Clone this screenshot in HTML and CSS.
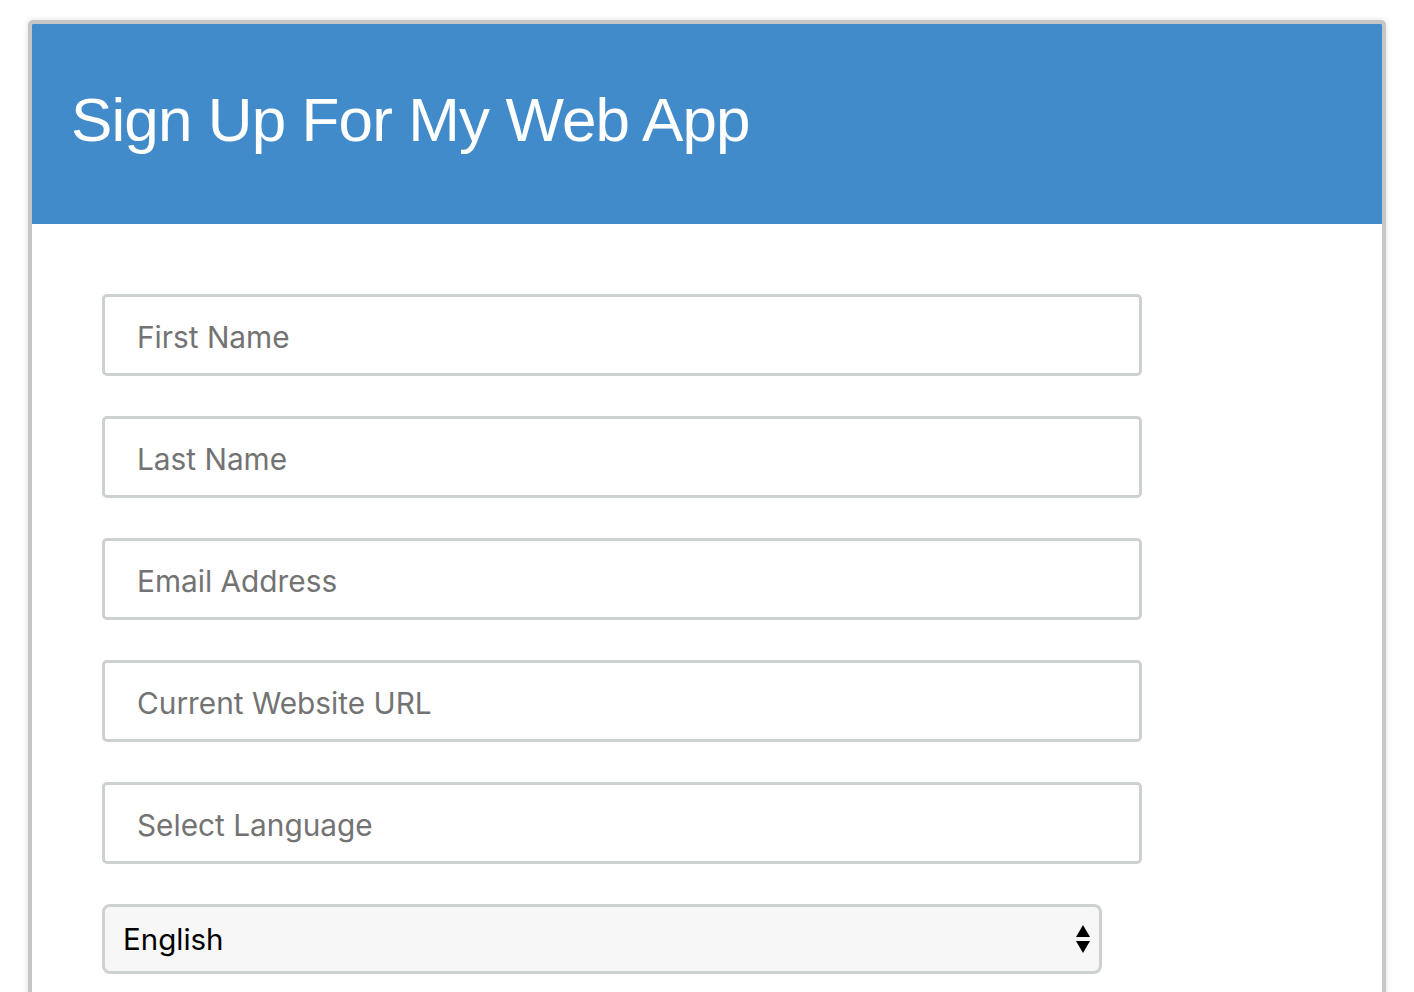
FILE: index.html
```html
<!DOCTYPE html>
<html lang="en">
<head>
<meta charset="utf-8">
<title>Sign Up For My Web App</title>
<link rel="stylesheet" href="styles.css">
</head>
<body>
<div class="page">
  <div class="card">
    <header class="card-header">
      <h1 class="title">Sign Up For My Web App</h1>
    </header>
    <form class="form">
      <input class="field" type="text" placeholder="First Name">
      <input class="field" type="text" placeholder="Last Name">
      <input class="field" type="email" placeholder="Email Address">
      <input class="field" type="url" placeholder="Current Website URL">
      <input class="field" type="text" placeholder="Select Language">
      <div class="select">
        <span class="select-value">English</span>
        <svg class="select-arrows" width="14" height="28" viewBox="0 0 14 28" aria-hidden="true">
          <polygon points="7,0 14,12 0,12" fill="#000"/>
          <polygon points="0,16 14,16 7,28" fill="#000"/>
        </svg>
      </div>
    </form>
  </div>
</div>
</body>
</html>
```
FILE: styles.css
```css
html, body {
  margin: 0;
  padding: 0;
  background: #ffffff;
}
body {
  padding: 8px;
  font-family: "Liberation Sans", Arial, sans-serif;
}
.page {
  padding: 12px 20px 0 20px;
}
.card {
  border: 4px solid #c6c6c6;
  border-radius: 5px;
  background: #fff;
  box-shadow: 0 0 6px rgba(0,0,0,0.12);
  overflow: hidden;
  min-height: 1100px;
}
.card-header {
  background: #428bca;
  height: 200px;
  display: flex;
  align-items: center;
  padding-left: 39px;
}
.title {
  margin: 0;
  color: #fff;
  font-family: "Liberation Sans", Arial, Helvetica, sans-serif;
  font-weight: 400;
  font-size: 62px;
  letter-spacing: -0.9px;
  line-height: 1;
  position: relative;
  top: -4px;
}
.form {
  padding: 70px 0 0 70px;
  display: flex;
  flex-direction: column;
  gap: 40px;
}
.field {
  box-sizing: border-box;
  width: 1040px;
  height: 82px;
  border: 3px solid #ccd1d1;
  border-radius: 5px;
  padding: 3px 32px 0 32px;
  font-family: Inter, "Noto Sans", sans-serif;
  font-size: 29.8px;
  color: #333;
  background: #fff;
  outline: none;
}
.field::placeholder {
  color: #737373;
  opacity: 1;
}
.select {
  box-sizing: border-box;
  width: 1000px;
  height: 70px;
  border: 3px solid #ccd1d1;
  border-radius: 8px;
  background: #f7f7f7;
  display: flex;
  align-items: center;
  justify-content: space-between;
  padding: 0 9px 0 18px;
}
.select-value {
  font-family: Inter, "Noto Sans", sans-serif;
  font-size: 29.5px;
  color: #000;
}
.select-arrows {
  display: block;
}
```
